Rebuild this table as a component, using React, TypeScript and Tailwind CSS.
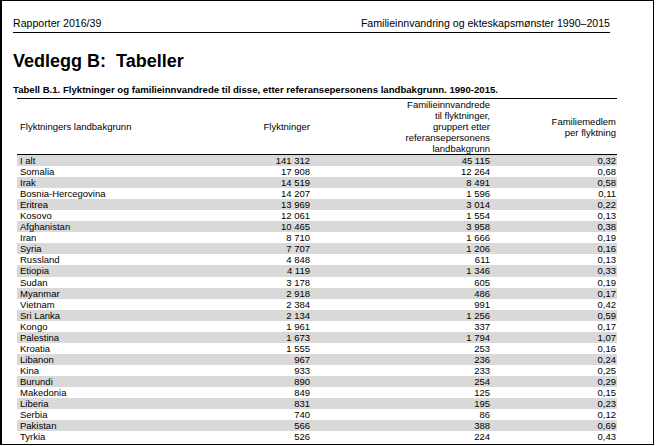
import React from 'react';

const rows: [string, string, string, string][] = [
  ['I alt', '141 312', '45 115', '0,32'],
  ['Somalia', '17 908', '12 264', '0,68'],
  ['Irak', '14 519', '8 491', '0,58'],
  ['Bosnia-Hercegovina', '14 207', '1 596', '0,11'],
  ['Eritrea', '13 969', '3 014', '0,22'],
  ['Kosovo', '12 061', '1 554', '0,13'],
  ['Afghanistan', '10 465', '3 958', '0,38'],
  ['Iran', '8 710', '1 666', '0,19'],
  ['Syria', '7 707', '1 206', '0,16'],
  ['Russland', '4 848', '611', '0,13'],
  ['Etiopia', '4 119', '1 346', '0,33'],
  ['Sudan', '3 178', '605', '0,19'],
  ['Myanmar', '2 918', '486', '0,17'],
  ['Vietnam', '2 384', '991', '0,42'],
  ['Sri Lanka', '2 134', '1 256', '0,59'],
  ['Kongo', '1 961', '337', '0,17'],
  ['Palestina', '1 673', '1 794', '1,07'],
  ['Kroatia', '1 555', '253', '0,16'],
  ['Libanon', '967', '236', '0,24'],
  ['Kina', '933', '233', '0,25'],
  ['Burundi', '890', '254', '0,29'],
  ['Makedonia', '849', '125', '0,15'],
  ['Liberia', '831', '195', '0,23'],
  ['Serbia', '740', '86', '0,12'],
  ['Pakistan', '566', '388', '0,69'],
  ['Tyrkia', '526', '224', '0,43'],
];

const App = () => {
  return (
    <div className="w-[656px] h-[446px] bg-white overflow-hidden text-black font-['Liberation_Sans',Arial,sans-serif]">
      <div className="w-[654px] h-[445px] border-t border-l-2 border-r border-b border-black overflow-hidden pl-[11px] pt-[16px]">
        {/* page header */}
        <div className="w-[597px] flex justify-between items-center h-[13px] text-[10.6px] leading-[13px]">
          <span>Rapporter 2016/39</span>
          <span>Familieinnvandring og ekteskapsmønster 1990–2015</span>
        </div>
        <div className="h-[2px] w-[597px] border-b border-black box-content" />

        <h1 className="mt-[18px] text-[18px] leading-[20px] font-bold">Vedlegg B:&nbsp; Tabeller</h1>
        <p className="mt-[13px] text-[9.6px] leading-[11px] font-bold whitespace-nowrap">
          Tabell B.1. Flyktninger og familieinnvandrede til disse, etter referansepersonens landbakgrunn. 1990-2015.
        </p>

        {/* table */}
        <div className="mt-[3px] ml-[4px] w-[600px] text-[9.5px]">
          <div className="grid grid-cols-[203px_90px_180px_127px] h-[57px] border-t border-b border-black items-center leading-[11px]">
            <div className="pl-[3px]">Flyktningers landbakgrunn</div>
            <div className="text-right">Flyktninger</div>
            <div className="text-right">
              Familieinnvandrede<br />til flyktninger,<br />gruppert etter<br />referansepersonens<br />landbakgrunn
            </div>
            <div className="text-right pr-[1px]">
              Familiemedlem<br />per flyktning
            </div>
          </div>
          {rows.map((r, i) => (
            <div
              key={r[0]}
              className={`grid grid-cols-[203px_90px_180px_127px] h-[11.06px] leading-[11px] whitespace-nowrap overflow-hidden ${
                i % 2 === 0 ? 'bg-[#d9d9d9]' : 'bg-white'
              }`}
            >
              <div className="pl-[3px]">{r[0]}</div>
              <div className="text-right">{r[1]}</div>
              <div className="text-right">{r[2]}</div>
              <div className="text-right pr-[1px]">{r[3]}</div>
            </div>
          ))}
        </div>
      </div>
    </div>
  );
};

export default App;
